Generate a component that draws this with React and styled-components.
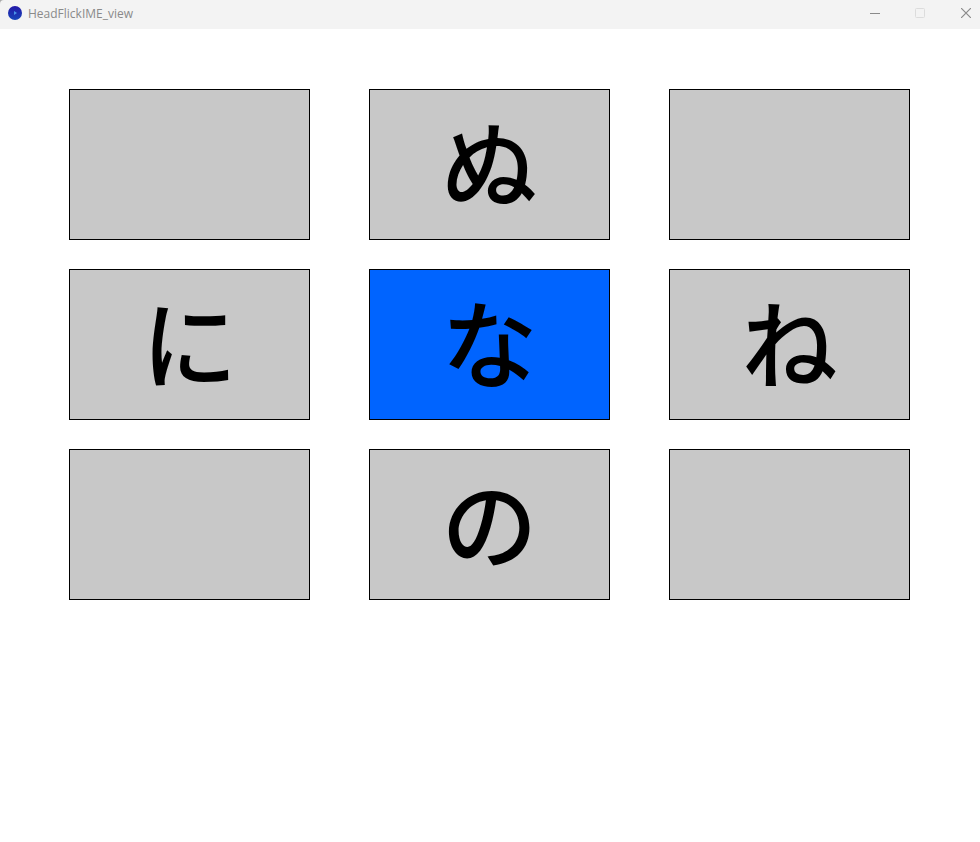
import React from "react";
import styled, { createGlobalStyle } from "styled-components";

const GlobalStyle = createGlobalStyle`
  body { margin: 0; background: #fff; font-family: "Open Sans", "Noto Sans", sans-serif; }
`;
const WindowTop = styled.div`
  background: #a8a8a8;
`;
const TitleBar = styled.header`
  display: flex;
  align-items: center;
  height: 29px;
  padding-left: 8px;
  border-top-left-radius: 4px;
  background: #f3f3f3;
  color: #8a8a8a;
  box-sizing: border-box;
`;
const AppIcon = styled.svg`
  width: 14px;
  height: 14px;
  margin-bottom: 3px;
`;
const Title = styled.h1`
  flex: 1;
  margin: 0 0 1px 6px;
  font-size: 12px;
  line-height: 16px;
  font-weight: 400;
`;
const WindowControls = styled.div`
  display: flex;
  height: 100%;
`;
const ControlButton = styled.button`
  display: flex;
  justify-content: center;
  width: 45px;
  padding: 8px 0 0;
  border: 0;
  background: transparent;
  color: ${(p) => (p.disabled ? "#dcdcdc" : "#8a8a8a")};
`;
const CloseButton = styled(ControlButton)`
  width: 28px;
  margin-left: 10px;
`;
const Board = styled.main`
  display: grid;
  grid-template-columns: repeat(3, 1fr);
  gap: 29px 59px;
  padding: 60px 70px 60px 69px;
`;
const Key = styled.button`
  display: flex;
  align-items: center;
  justify-content: center;
  height: 151px;
  padding: 0 0 10px;
  border: 1px solid #000;
  background: ${(p) => (p.$active ? "#0064ff" : "#c8c8c8")};
  color: #000;
  font: 500 96px/100px "Noto Sans CJK JP", sans-serif;
`;

const keys = ["", "ぬ", "", "に", "な", "ね", "", "の", ""];

export default function App() {
  return (
    <>
      <GlobalStyle />
      <WindowTop>
        <TitleBar>
          <AppIcon viewBox="0 0 14 14" aria-hidden="true">
            <defs>
              <linearGradient id="disc" x1="0" y1="0" x2="0" y2="1">
                <stop offset="0" stopColor="#2318a8" />
                <stop offset="1" stopColor="#1746b8" />
              </linearGradient>
            </defs>
            <circle cx="7" cy="7" r="7" fill="url(#disc)" />
            <path d="M6 5 9 7 6 9z" fill="#4a94e8" />
          </AppIcon>
          <Title>HeadFlickIME_view</Title>
          <WindowControls>
            <ControlButton aria-label="Minimize">
              <svg width="10" height="10" fill="none" stroke="currentColor"><path d="M0 5.5h10" /></svg>
            </ControlButton>
            <ControlButton aria-label="Maximize" disabled>
              <svg width="10" height="10" fill="none" stroke="currentColor"><rect x=".5" y=".5" width="9" height="9" rx="1" /></svg>
            </ControlButton>
            <CloseButton aria-label="Close">
              <svg width="10" height="10" fill="none" stroke="currentColor" strokeWidth="1.2"><path d="m0 0 10 10M10 0 0 10" /></svg>
            </CloseButton>
          </WindowControls>
        </TitleBar>
      </WindowTop>
      <Board>
        {keys.map((kana, i) => (
          <Key key={i} $active={i === 4} aria-label={kana || "blank"}>{kana}</Key>
        ))}
      </Board>
    </>
  );
}
